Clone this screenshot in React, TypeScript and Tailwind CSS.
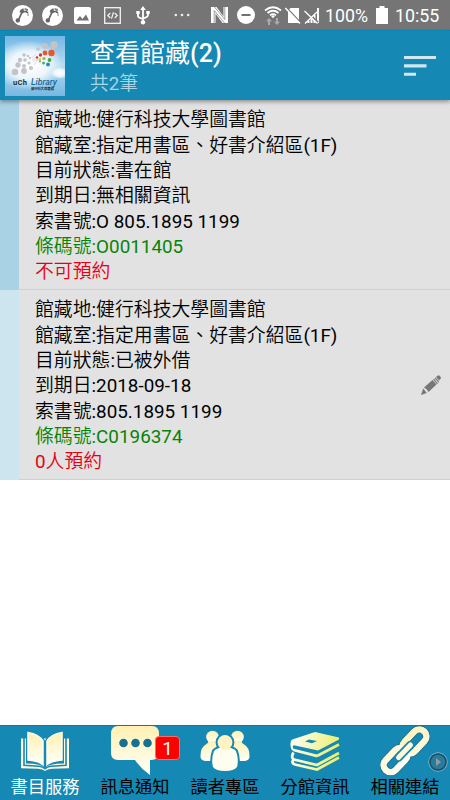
import type { ReactNode } from 'react';

interface Holding {
  barcode: string;
  lines: string[];
  reservation: string;
  stripe: string;
  editable: boolean;
}

const holdings: Holding[] = [
  {
    barcode: '條碼號:O0011405',
    lines: [
      '館藏地:健行科技大學圖書館',
      '館藏室:指定用書區、好書介紹區(1F)',
      '目前狀態:書在館',
      '到期日:無相關資訊',
      '索書號:O 805.1895 1199',
    ],
    reservation: '不可預約',
    stripe: 'bg-[#a9d3e5]',
    editable: false,
  },
  {
    barcode: '條碼號:C0196374',
    lines: [
      '館藏地:健行科技大學圖書館',
      '館藏室:指定用書區、好書介紹區(1F)',
      '目前狀態:已被外借',
      '到期日:2018-09-18',
      '索書號:805.1895 1199',
    ],
    reservation: '0人預約',
    stripe: 'bg-[#cce5ee]',
    editable: true,
  },
];

// Han characters use the demi-light cut, Latin and digits stay regular
function MixedText({ text }: { text: string }) {
  return text.split(/([\x20-\x7e]+)/).map((part, index) =>
    index % 2 ? (
      <span key={index} className="font-normal">
        {part}
      </span>
    ) : (
      part
    )
  );
}

function NoteIcon() {
  return (
    <svg viewBox="0 0 21 21" className="size-[21px]">
      <circle cx="10.5" cy="10.5" r="10.5" fill="#fff" />
      <path d="M6.2 15.6 10 7.2l4.8-1" fill="none" stroke="#666" strokeWidth="1.7" />
      <circle cx="5.8" cy="15.4" r="2.2" fill="#666" />
      <circle cx="10" cy="6.3" r="2.1" fill="#666" />
      <path d="M9.8 4.4 15 3.8l1.2 6.8M14.4 6l.4 2.6" fill="none" stroke="#666" strokeWidth="1.2" strokeDasharray="2 .7" />
    </svg>
  );
}

function StatusBar() {
  return (
    <div className="flex h-[30px] shrink-0 items-center bg-[#757575] pl-3 text-white">
      <NoteIcon />
      <div className="ml-[9px]">
        <NoteIcon />
      </div>
      <svg viewBox="0 0 17 17" className="ml-[11px] size-[17px]">
        <rect width="17" height="17" rx="2" fill="#fff" />
        <path d="M2.5 13.5 6 9l2.5 3L12 7.5l3 6z" fill="#707070" />
      </svg>
      <svg viewBox="0 0 17 17" className="ml-[13px] size-[17px]" fill="none" stroke="#f5f5f5">
        <rect x=".7" y=".7" width="15.6" height="15.6" strokeWidth="1.3" />
        <path d="M6.3 6 3.8 8.5 6.3 11m4.4-5 2.5 2.5-2.5 2.5M9.5 5.3l-2 6.3" strokeWidth="1.2" />
      </svg>
      <svg viewBox="0 0 14 19" className="ml-[15px] h-[19px] w-[14px]" fill="none" stroke="#fff" strokeWidth="1.8">
        <path d="M7 3v13M2 6.5V10q0 2 5 2.8M12 6.5V9q0 2-5 3.5" />
        <path d="m7 0 2.800 4H4.200zM.3 5h3.400v3H.3zM10.300 5h3.400v3h-3.400z" fill="#fff" stroke="none" />
        <circle cx="7" cy="16.3" r="2.2" fill="#fff" stroke="none" />
      </svg>
      <svg viewBox="0 0 16 4" className="ml-[24px] h-1 w-4" fill="#eee">
        <circle cx="1.8" cy="2" r="1.3" />
        <circle cx="8" cy="2" r="1.3" />
        <circle cx="14.2" cy="2" r="1.3" />
      </svg>
      <svg viewBox="0 0 17 16" className="ml-[21px] h-4 w-[17px]">
        <path d="M0 0h5.500l7 9.500V0H17v16h-5.500l-7-9.500V16H0z" fill="#fff" />
        <path d="M3.200 16V3.500L13.500 16M3.500 0l10.300 12.500V0" fill="none" stroke="#777" strokeWidth=".7" />
      </svg>
      <svg viewBox="0 0 18 18" className="ml-[9px] size-[18px]">
        <circle cx="9" cy="9" r="9" fill="#fff" />
        <path d="M4.5 9h9" stroke="#707070" strokeWidth="2" />
      </svg>
      <svg viewBox="0 0 18 19" className="ml-[9px] h-[19px] w-[18px]" fill="none">
        <path d="M1 4.500Q9-2 17 4.500M3.500 7Q9 2.500 14.500 7M6 9.300q3-2.300 6 0" stroke="#fff" strokeWidth="1.7" />
        <path d="m7 10 2 2.200 2-2.200q-2-1.300-4 0z" fill="#fff" />
        <path d="M2 15.200 5 12l3 3.200H6V19H4v-3.800zM10 15.800h2V12h2v3.800h2L13 19z" fill="#aaa" />
      </svg>
      <svg viewBox="0 0 16 17" className="ml-[3px] h-[17px] w-4">
        <path d="M3 3.500 5.500 1H14v15H3z" fill="#fff" />
        <path d="m1.500.5 14 15" stroke="#757575" strokeWidth="1.5" />
        <path d="m.3 1 14.700 15.500" stroke="#fff" strokeWidth="1.5" />
      </svg>
      <svg viewBox="0 0 16 17" className="ml-[3px] h-[17px] w-4" stroke="#fff">
        <path d="M4.500 14v2M7.500 11.500V16M10.500 8v8M14 1v15" strokeWidth="2" />
        <path d="M1.500 3.500 14 15.500" stroke="#757575" strokeWidth="2" />
        <path d="m.5 4 13 12.500M1 16.500 13 5" strokeWidth="1.3" />
      </svg>
      <span className="ml-[5px] w-[43px] pt-px text-[17.8px] leading-none whitespace-nowrap">100%</span>
      <svg viewBox="0 0 12 18" className="ml-[8px] h-[18px] w-3">
        <path d="M3.500 0h5v2H12v16H0V2h3.500z" fill="#fff" />
      </svg>
      <span className="ml-[7px] pt-px text-[17.8px] leading-none">10:55</span>
    </div>
  );
}

function LibraryLogo() {
  return (
    <svg viewBox="0 0 60 60" className="size-[60px] shrink-0">
      <defs>
        <linearGradient id="sky" x1="0" y1="0" x2="0" y2="1">
          <stop offset="0" stopColor="#72b7e4" />
          <stop offset=".48" stopColor="#b8dcf1" />
          <stop offset="1" stopColor="#76b8e2" />
        </linearGradient>
        <radialGradient id="glow">
          <stop offset="0" stopColor="#fff" />
          <stop offset=".55" stopColor="#fff" stopOpacity=".8" />
          <stop offset="1" stopColor="#fff" stopOpacity="0" />
        </radialGradient>
      </defs>
      <rect width="60" height="60" fill="url(#sky)" />
      <ellipse cx="24" cy="29" rx="34" ry="25" fill="url(#glow)" />
      <ellipse cx="55" cy="37" rx="9" ry="6" fill="url(#glow)" />
      <g fill="#c3c3c8">
        <circle cx="49" cy="9" r="3.7" />
        <circle cx="40" cy="10" r="2.9" />
        <circle cx="33" cy="13" r="1.8" />
        <circle cx="19" cy="19" r="1.8" />
        <circle cx="23" cy="20" r="1.2" />
        <circle cx="15" cy="24" r="2.2" />
        <circle cx="20" cy="24" r="1.8" />
        <circle cx="25" cy="22" r="1.2" />
        <circle cx="13" cy="29" r="2.7" />
        <circle cx="19" cy="30" r="2" />
        <circle cx="24" cy="27" r="1.6" />
        <circle cx="10" cy="36" r="3.3" />
        <circle cx="19" cy="35" r="2.9" />
        <circle cx="26" cy="32" r="2.1" />
      </g>
      <path d="m27 22 4-4m-4 6 6-4m-5 5 6-2m-5 6 4-5" stroke="#ddd" strokeWidth="1" />
      <g fill="#ee542b">
        <circle cx="46.5" cy="17" r="3.2" />
        <circle cx="40" cy="17" r="2.4" />
        <circle cx="35.5" cy="19" r="1.7" fill="#df3434" />
        <circle cx="32" cy="21.5" r="1.2" fill="#df3434" />
      </g>
      <circle cx="44.5" cy="24" r="1.9" fill="#48a83c" />
      <circle cx="39" cy="22.5" r="1.6" fill="#8dbd32" />
      <circle cx="35" cy="23.5" r="1.3" fill="#e4bc30" />
      <circle cx="43" cy="28.5" r="1.9" fill="#238ac8" />
      <circle cx="38.5" cy="27" r="1.5" fill="#41b38d" />
      <circle cx="35" cy="25.5" r="1" fill="#70ae42" />
      <text x="8" y="48.5" textLength="14" fontSize="7.5" fontWeight="700" fill="#24313b">uCh</text>
      <text x="26" y="48.5" textLength="26" lengthAdjust="spacingAndGlyphs" fontSize="8.5" fontStyle="italic" fontWeight="500" fill="#146b9b">Library</text>
      <text x="26" y="53.8" textLength="23" lengthAdjust="spacingAndGlyphs" fontSize="3.9" fontWeight="700" fill="#24313b">健行科大圖書館</text>
    </svg>
  );
}

function Header() {
  return (
    <header className="relative z-10 flex h-[70px] shrink-0 items-center border-t border-[#0885b6] bg-[#1588b3] pr-[14px] pl-[5px] shadow-[0_2px_4px_rgba(0,0,0,0.35)]">
      <LibraryLogo />
      <div className="ml-[25px] flex-1 pt-[5px]">
        <h1 className="h-[33px] text-[25px] leading-[32px] font-medium text-white">
          <span className="font-normal">查看館藏</span>(2)
        </h1>
        <p className="h-[27px] text-[18.75px] leading-[26px] font-[350] text-[#a9d5e6]">
          <MixedText text="共2筆" />
        </p>
      </div>
      <svg viewBox="0 0 32 20" className="h-5 w-8" fill="#d1e8f0">
        <path d="M0 0h32v3H0zM0 8.300h22.500v3.200H0zM0 16.700h12v3H0z" />
      </svg>
    </header>
  );
}

function PencilIcon() {
  return (
    <svg viewBox="0 0 20 20" className="size-5" fill="#777">
      <path d="M0 20 2.200 13.500 5.800 18zM3 12.500 11.500 5l4 4.500L7.500 17l-1.600-2.600zM15 2l1.500-1.300q1.200-.8 2.300.2l.8 1q.8 1.200-.3 2.200L18 5.400z" />
      <path d="m12.500 4.200 4 4.600m-2.500-6 3.800 4.400" stroke="#777" strokeWidth="1.2" />
    </svg>
  );
}

function HoldingRow({ holding }: { holding: Holding }) {
  return (
    <div className="flex h-[190px] shrink-0 bg-[#e2e2e2]">
      <div className={`w-[19px] ${holding.stripe}`} />
      <div className="flex flex-1 items-center border-b border-[#cfcfcf] pr-[9px] pl-4">
        <div className="flex-1 pt-[5px] text-[18.85px] leading-[25.3px] font-[350] text-black">
          {holding.lines.map((line) => (
            <p key={line}>
              <MixedText text={line} />
            </p>
          ))}
          <p className="text-[#078407]">
            <MixedText text={holding.barcode} />
          </p>
          <p className="text-[#e60012]">
            <MixedText text={holding.reservation} />
          </p>
        </div>
        {holding.editable && <PencilIcon />}
      </div>
    </div>
  );
}

function BookIcon() {
  return (
    <svg viewBox="0 0 50 44" className="h-[42px] w-[50px]" fill="none" preserveAspectRatio="none">
      <path d="M5 9H1v31l17 .5q5 .5 7 2.500 2-2 7-2.500l17-.5V9h-4" fill="#fffbe3" />
      <path d="M4 8v29l15 1q4 .5 6 2.500 2-2 6-2.500l15-1V8" stroke="#1588b3" strokeWidth="1.6" />
      <path d="M6 1q15 1 19 10Q29 2 44 1v34q-16 0-19 5-3-5-19-5z" fill="#1588b3" />
      <path d="M8 2.500q11 2 15 9v25q-4-4-15-5zM42 2.500q-11 2-15 9v25q4-4 15-5z" fill="url(#cream)" stroke="#fffdf0" strokeWidth="1.5" />
    </svg>
  );
}

function MessageIcon() {
  return (
    <svg viewBox="0 0 50 50" className="h-[50px] w-[50px]">
      <path d="M8 0h34q7 0 7 8v19q0 7-8 7h-1v15q-9-6-15-15H8q-7 0-7-7V8q0-8 7-8z" fill="url(#cream)" />
      <g fill="#176f91">
        <circle cx="13.5" cy="17" r="4.3" />
        <circle cx="25.5" cy="17" r="4.3" />
        <circle cx="37.5" cy="17" r="4.3" />
      </g>
    </svg>
  );
}

function PeopleIcon() {
  const body = 'M19 18q-3 1-5 3-3 8-1 16 3 4 12 4t12-4q2-8-1-16-2-2-5-3z';
  return (
    <svg viewBox="0 0 50 42" className="h-[42px] w-[50px]">
      <g fill="url(#cream)">
        <circle cx="12.5" cy="7" r="6.3" />
        <circle cx="37.5" cy="7" r="6.3" />
        <path d="M8.500 11H18v20H5q-5-1-4.500-5 0-9 6-12 2-1 2-3zM41.500 11H32v20h13q5-1 4.500-5 0-9-6-12-2-1-2-3z" />
      </g>
      <g fill="#1588b3" stroke="#1588b3" strokeWidth="4">
        <path d={body} />
        <circle cx="25" cy="12.5" r="7.4" />
      </g>
      <path d={body} fill="#fffdf0" />
      <circle cx="25" cy="12.5" r="7.4" fill="#fff3c2" />
    </svg>
  );
}

function BooksIcon() {
  return (
    <svg viewBox="0 0 50 40" className="mt-px h-10 w-[50px]" fill="none">
      <path d="M25 1 49 6.500v2L28 19.500 5 14.500q-3-1-2 3L27 23.500v3L4 20.500q-4-2-3.500-8Q.5 9 3 8.200zM19 8.500l-4 2 7 1.700 5-2.200z" fill="url(#book)" fillRule="evenodd" />
      <path d="m27 25 22-11.500M3.500 21.500Q.5 27 4 28.500l23 5.500 22-12M3.500 28.500Q1 32 5 33.500l22 5 22-12" stroke="url(#book)" strokeWidth="2.8" />
    </svg>
  );
}

function LinkIcon() {
  return (
    <svg viewBox="0 0 50 50" className="h-[50px] w-[50px]" fill="none">
      <g stroke="#166e8d" strokeWidth="8">
        <rect x="20.5" y="8.5" width="28" height="14" rx="7" transform="rotate(-46 34.5 15.5)" />
        <rect x="1.5" y="27" width="28" height="14" rx="7" transform="rotate(-46 15.5 34)" />
      </g>
      <g stroke="url(#linkFill)" strokeWidth="6.5">
        <rect x="20.5" y="8.5" width="28" height="14" rx="7" transform="rotate(-46 34.5 15.5)" />
        <rect x="1.5" y="27" width="28" height="14" rx="7" transform="rotate(-46 15.5 34)" />
      </g>
      <g strokeLinecap="round">
        <path d="m18.500 31.500 12-12.500" stroke="#1588b3" strokeWidth="8.5" />
        <path d="m18.500 31.500 12-12.500" stroke="#fff9dc" strokeWidth="5" />
      </g>
    </svg>
  );
}

const tabs: { label: string; icon: ReactNode; active?: boolean; badge?: number }[] = [
  { label: '書目服務', icon: <BookIcon />, active: true },
  { label: '訊息通知', icon: <MessageIcon />, badge: 1 },
  { label: '讀者專區', icon: <PeopleIcon /> },
  { label: '分館資訊', icon: <BooksIcon /> },
  { label: '相關連結', icon: <LinkIcon /> },
];

function BottomNav() {
  return (
    <nav className="relative flex h-[75px] shrink-0 border-t border-[#087ba6] bg-[#1588b3]">
      {/* Shared icon gradients */}
      <svg className="absolute size-0">
        <defs>
          <linearGradient id="cream" x1="0" y1="0" x2="0" y2="1">
            <stop offset="0" stopColor="#fff1b2" />
            <stop offset="1" stopColor="#fffffa" />
          </linearGradient>
          <linearGradient id="book" gradientUnits="userSpaceOnUse" x1="0" y1="5" x2="52" y2="20">
            <stop offset="0" stopColor="#fff" />
            <stop offset="1" stopColor="#e9ed5d" />
          </linearGradient>
          <linearGradient id="linkFill" gradientUnits="userSpaceOnUse" x1="0" y1="0" x2="0" y2="50">
            <stop offset="0" stopColor="#fff1b5" />
            <stop offset="1" stopColor="#fff" />
          </linearGradient>
        </defs>
      </svg>
      {tabs.map((tab) => (
        <div key={tab.label} className="relative flex w-[90px] flex-col items-center">
          <div className="flex h-[49px] items-center justify-center">{tab.icon}</div>
          <span className={`text-[17.25px] leading-[25px] whitespace-nowrap ${tab.active ? 'text-white' : 'text-black'}`}>
            {tab.label}
          </span>
          {tab.badge && (
            <span className="absolute top-[10px] left-[65px] flex h-6 w-[25px] items-center justify-center rounded-[4px] border border-[#ff6868] bg-[#f00] pt-0.5 text-[18.75px] leading-none text-white">
              {tab.badge}
            </span>
          )}
        </div>
      ))}
      <svg viewBox="0 0 20 20" className="absolute top-[26px] right-[2px] size-5">
        <circle cx="10" cy="10" r="9.2" fill="#287b9b" stroke="#8ebccc" strokeWidth="1" />
        <circle cx="10" cy="10" r="8" fill="none" stroke="#174d65" strokeWidth="1.5" />
        <path d="m8 6 5 4-5 4z" fill="#929b9f" />
      </svg>
    </nav>
  );
}

export default function App() {
  return (
    <div className="flex h-[800px] w-[450px] flex-col overflow-hidden bg-white font-[Roboto,'Noto_Sans_CJK_TC',sans-serif]">
      <StatusBar />
      <Header />
      <main className="flex flex-1 flex-col">
        {holdings.map((holding) => (
          <HoldingRow key={holding.barcode} holding={holding} />
        ))}
      </main>
      <BottomNav />
    </div>
  );
}
